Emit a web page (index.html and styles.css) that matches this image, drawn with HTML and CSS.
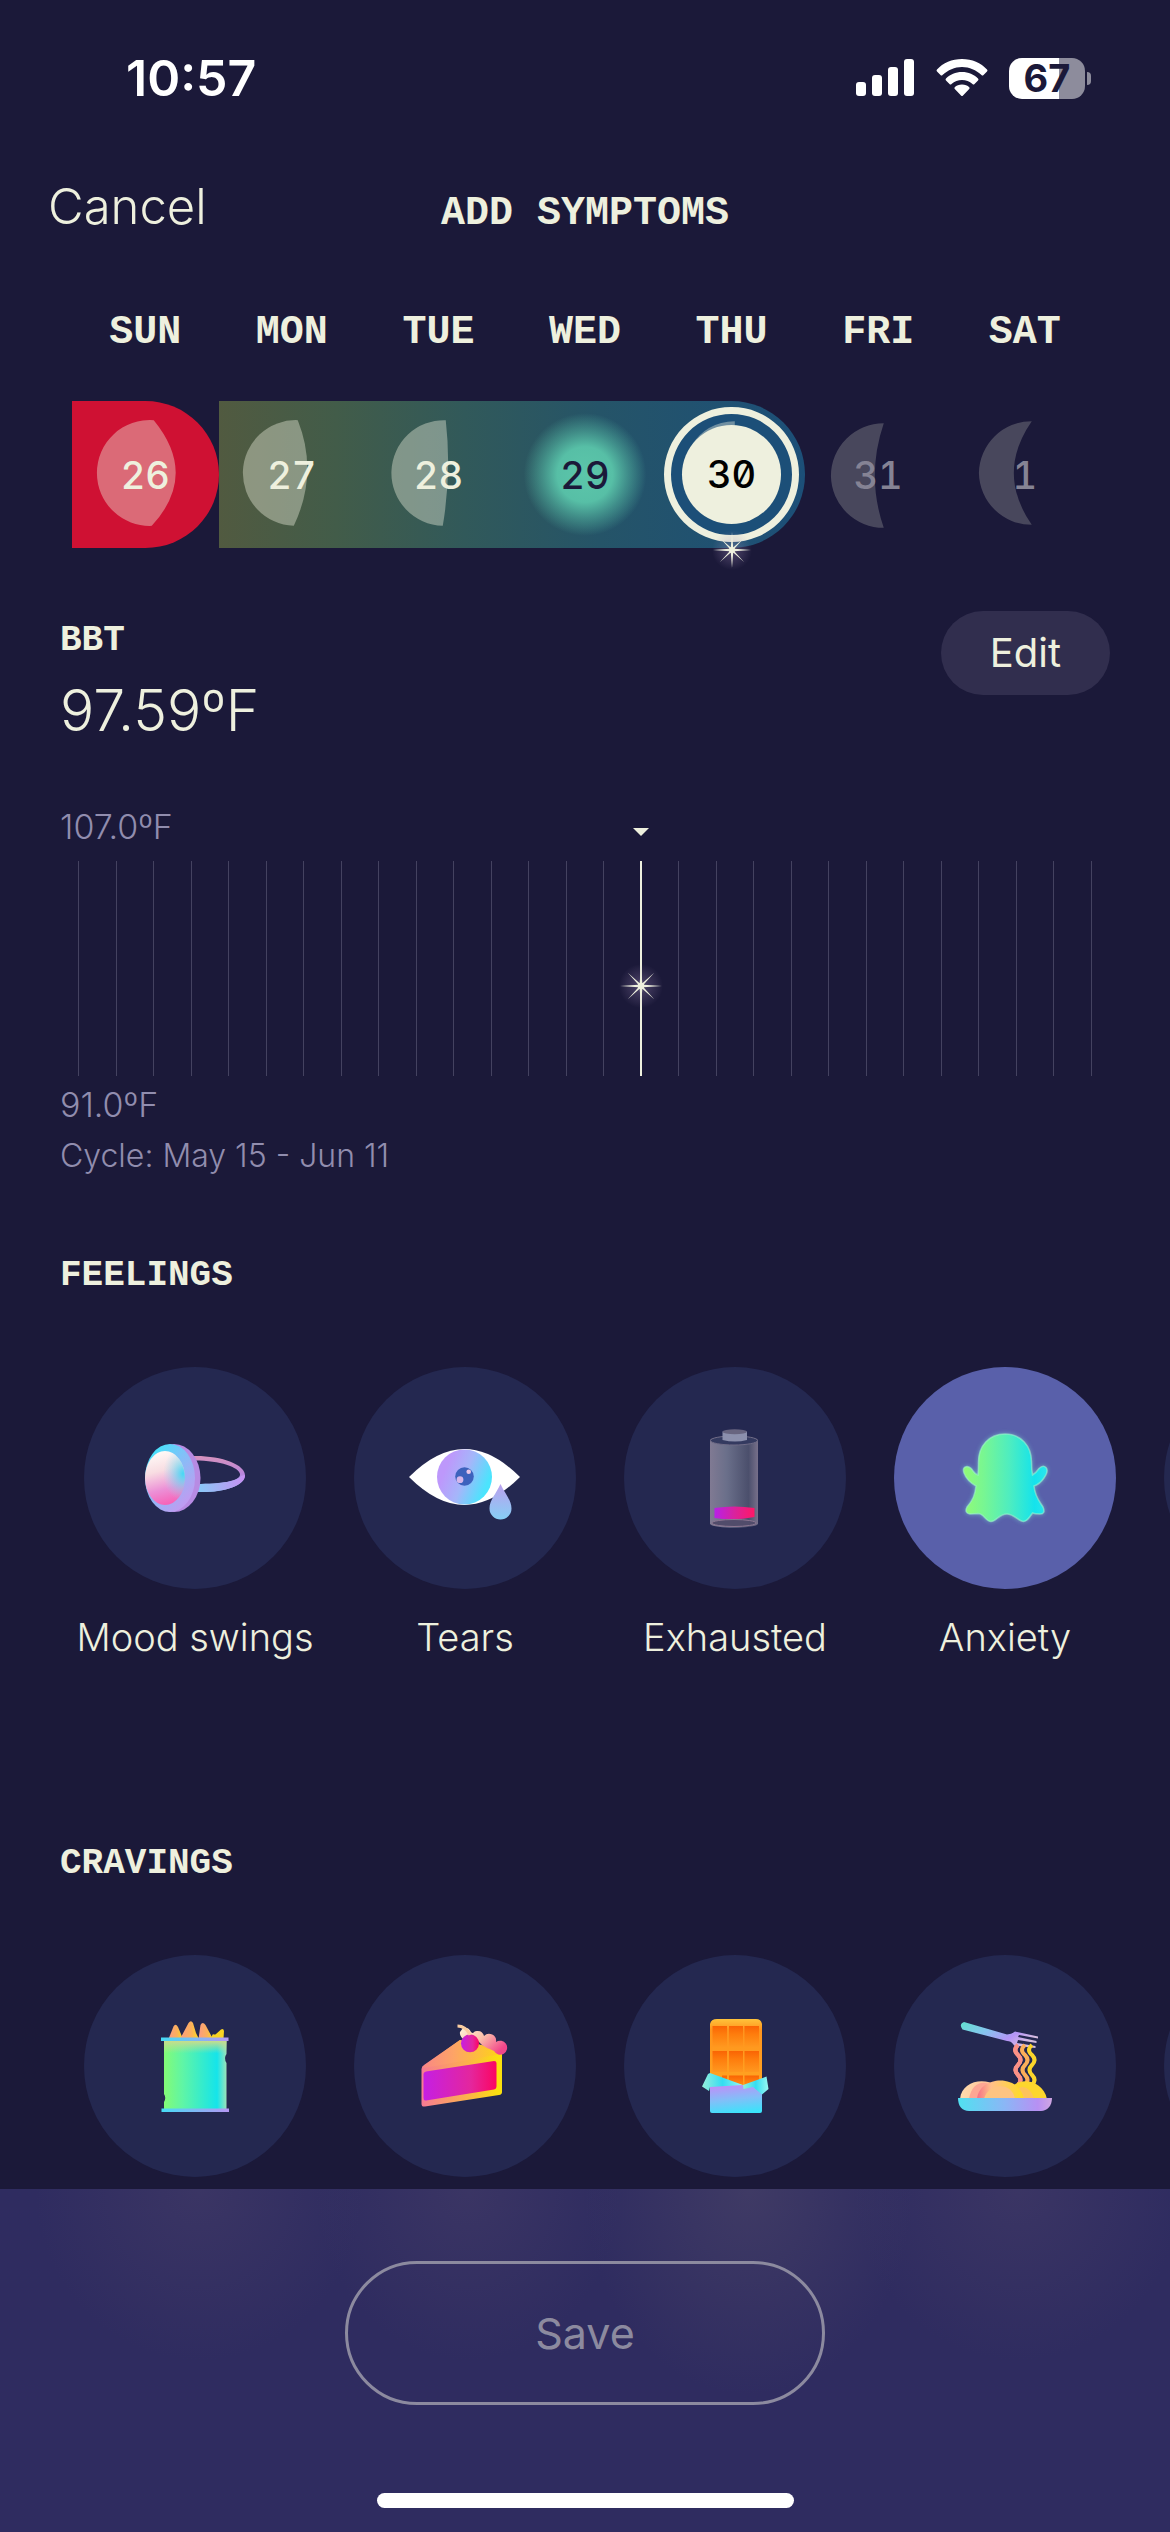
FILE: index.html
```html
<!DOCTYPE html>
<html lang="en">
<head>
<meta charset="utf-8">
<meta name="viewport" content="width=device-width, initial-scale=1">
<title>Add symptoms</title>
<link rel="stylesheet" href="styles.css">
</head>
<body>
<div class="status-bar">
  <time class="clock">10:57</time>
  <div class="status-icons">
    <svg width="59" height="38" viewBox="0 0 59 38" fill="#fff" aria-hidden="true">
      <rect x="0" y="23" width="10" height="14" rx="3"/><rect x="16" y="16" width="10" height="21" rx="3"/><rect x="32" y="8" width="10" height="29" rx="3"/><rect x="48" y="0" width="10" height="37" rx="3"/>
    </svg>
    <svg width="52" height="38" viewBox="0 0 52 38" fill="#fff" aria-hidden="true">
      <path d="M26 0C36 0 45 4 51 10.500Q52 11.500 51 12.500L47.500 16Q46.500 17 45.500 16C40 11 33.500 8 26 8S12 11 6.500 16Q5.500 17 4.500 16L1 12.500Q0 11.500 1 10.500C7 4 16 0 26 0Z"/>
      <path d="M26 13C32.500 13 38 15.500 42 19.500Q43 20.500 42 21.500L38.500 25Q37.500 26 36.500 25C33.500 22.500 30 21 26 21S18.500 22.500 15.500 25Q14.500 26 13.500 25L10 21.500Q9 20.500 10 19.500C14 15.500 19.500 13 26 13Z"/>
      <path d="M26 25.500C29 25.500 31.500 26.500 33.300 28.300Q34 29.200 33.200 30L27 36.500Q26 37.500 25 36.500L18.800 30Q18 29.200 18.700 28.300C20.500 26.500 23 25.500 26 25.500Z"/>
    </svg>
    <div class="battery"><span class="battery-level">67</span></div>
  </div>
</div>

<header class="top-bar">
  <button class="cancel" type="button">Cancel</button>
  <h1 class="mono-title">ADD SYMPTOMS</h1>
</header>

<main>
  <section class="calendar" aria-label="Week">
    <div class="week weekdays">
      <span>SUN</span><span>MON</span><span>TUE</span><span>WED</span><span>THU</span><span>FRI</span><span>SAT</span>
    </div>
    <div class="week days">
      <div class="phase"></div>
      <button type="button" class="day period"><svg class="moon" viewBox="0 0 147 147" aria-hidden="true"><path d="M82 19Q127 74 80 125A53 53 0 0 1 25 72A53 53 0 0 1 82 19Z"/></svg><span>26</span></button>
      <button type="button" class="day"><svg class="moon" viewBox="0 0 147 147" aria-hidden="true"><path d="M79 19Q100 72 75 125A53 53 0 0 1 79 19Z"/></svg><span>27</span></button>
      <button type="button" class="day"><svg class="moon" viewBox="0 0 147 147" aria-hidden="true"><path d="M81 19Q87 72 78 125A53 53 0 0 1 81 19Z"/></svg><span>28</span></button>
      <button type="button" class="day ovulation"><span>29</span></button>
      <button type="button" class="day selected" aria-current="date">
        <svg class="moon" viewBox="0 0 147 147" aria-hidden="true"><path d="M77 20V26Q56 27 34 44Q48 21 77 20Z"/></svg>
        <span class="disc">30</span>
        <svg class="sparkle" width="40" height="40" viewBox="0 0 40 40" aria-hidden="true"><use href="#spark"/></svg>
      </button>
      <button type="button" class="day future"><svg class="moon" viewBox="0 0 147 147" aria-hidden="true"><path d="M79 22Q61 75 79 127A53 53 0 0 1 26 75A53 53 0 0 1 79 22Z"/></svg><span>31</span></button>
      <button type="button" class="day future"><svg class="moon" viewBox="0 0 147 147" aria-hidden="true"><path d="M81 20Q45 72 81 124A53 53 0 0 1 28 72A53 53 0 0 1 81 20Z"/></svg><span>1</span></button>
    </div>
  </section>

  <section class="bbt">
    <div class="bbt-head">
      <div class="bbt-reading">
        <h2 class="section-title">BBT</h2>
        <p class="reading">97.59ºF</p>
      </div>
      <button class="edit" type="button">Edit</button>
    </div>
    <p class="note chart-max">107.0ºF</p>
    <div class="chart">
      <i></i><i></i><i></i><i></i><i></i><i></i><i></i><i></i><i></i><i></i><i></i><i></i><i></i><i></i><i></i>
      <i class="today"><svg class="sparkle" width="44" height="44" viewBox="0 0 40 40" aria-hidden="true">
        <defs>
          <radialGradient id="glow"><stop offset="0" stop-color="#a28bb8" stop-opacity=".4"/><stop offset="1" stop-color="#a28bb8" stop-opacity="0"/></radialGradient>
          <g id="spark"><circle cx="20" cy="20" r="20" fill="url(#glow)"/><path fill="#eef0de" d="M20 2L21.200 17.500L32 8L22.300 18.800L39 20L22.300 21.200L32 32L21.200 22.500L20 38L18.800 22.500L8 32L17.700 21.200L1 20L17.700 18.800L8 8L18.800 17.500Z"/><circle cx="20" cy="20" r="3" fill="#eef0de"/></g>
        </defs>
        <use href="#spark"/>
      </svg></i>
      <i></i><i></i><i></i><i></i><i></i><i></i><i></i><i></i><i></i><i></i><i></i><i></i>
    </div>
    <p class="note chart-min">91.0ºF</p>
    <p class="note cycle">Cycle: May 15 - Jun 11</p>
  </section>

  <section class="symptoms feelings">
    <h2 class="section-title">FEELINGS</h2>
    <div class="options">
      <button type="button" class="option" aria-pressed="false">
        <svg class="bubble" viewBox="0 0 222 222" aria-hidden="true">
          <defs>
            <linearGradient id="band" x1="0" y1="0" x2="0" y2="1"><stop offset="0" stop-color="#d893bd"/><stop offset=".5" stop-color="#b886dc"/><stop offset="1" stop-color="#88cdf8"/></linearGradient>
            <linearGradient id="bandLow"><stop offset="0" stop-color="#86cdf8"/><stop offset="1" stop-color="#c78ff2"/></linearGradient>
            <linearGradient id="rim" x1="0" y1="0" x2=".8" y2="1"><stop offset=".1" stop-color="#3fe6fb"/><stop offset=".45" stop-color="#7fc2f8"/><stop offset="1" stop-color="#c996f0"/></linearGradient>
            <linearGradient id="stone" x1=".4" y1="0" x2=".6" y2="1"><stop offset="0" stop-color="#fffaf7"/><stop offset=".35" stop-color="#f8dde2"/><stop offset=".7" stop-color="#ec8fd6"/><stop offset="1" stop-color="#f85fb5"/></linearGradient>
            <radialGradient id="stoneBlue" cx=".95" cy=".42" r=".5"><stop offset="0" stop-color="#45d8f5"/><stop offset="1" stop-color="#9cdcf5" stop-opacity="0"/></radialGradient>
          </defs>
          <path d="M108 89C135 88 162 97 161 109C160 119 139 126 112 125V117C138 117 157 114 156 107C155 100 135 93 108 93.500Z" fill="url(#band)"/>
          <path d="M112 117C138 117 154 114 157 109L161 108C161 119 139 126 112 125Z" fill="url(#bandLow)"/>
          <ellipse cx="90" cy="111" rx="26.500" ry="34" fill="#b78be3"/>
          <ellipse cx="86" cy="111" rx="25" ry="34" fill="url(#rim)"/>
          <ellipse cx="81" cy="111" rx="20" ry="27" fill="url(#stone)"/>
          <ellipse cx="81" cy="111" rx="20" ry="27" fill="url(#stoneBlue)"/>
        </svg>
        <span>Mood swings</span>
      </button>
      <button type="button" class="option" aria-pressed="false">
        <svg class="bubble" viewBox="0 0 222 222" aria-hidden="true">
          <defs>
            <linearGradient id="iris" x1="0" y1=".3" x2="1" y2=".7"><stop offset=".15" stop-color="#bd98fb"/><stop offset=".5" stop-color="#a5b6fa"/><stop offset=".9" stop-color="#4be4fd"/></linearGradient>
            <linearGradient id="tear" x1="0" y1="0" x2="0" y2="1"><stop offset="0" stop-color="#bba0ee"/><stop offset="1" stop-color="#86cff5"/></linearGradient>
          </defs>
          <path d="M55 110Q83 82 110.500 82T166 110Q138 138 110.500 138T55 110Z" fill="#fff"/>
          <circle cx="110.500" cy="110" r="27.500" fill="url(#iris)"/>
          <circle cx="110.500" cy="109.500" r="9.300" fill="#3d62bd"/>
          <circle cx="114.700" cy="104.700" r="2.300" fill="#e9c6e8"/><circle cx="106" cy="112.700" r="3.400" fill="#d5b6ea"/>
          <path d="M146.500 117C151 127 157.500 133 157.500 141.500A11 11 0 0 1 135.500 141.500C135.500 133 142 127 146.500 117Z" fill="url(#tear)"/>
        </svg>
        <span>Tears</span>
      </button>
      <button type="button" class="option" aria-pressed="false">
        <svg class="bubble" viewBox="0 0 222 222" aria-hidden="true">
          <defs>
            <linearGradient id="cell"><stop offset="0" stop-color="#807a93"/><stop offset=".35" stop-color="#6a6f8a"/><stop offset=".8" stop-color="#4b4f6c"/><stop offset="1" stop-color="#77708a"/></linearGradient>
            <linearGradient id="charge"><stop offset="0" stop-color="#b820e8"/><stop offset=".5" stop-color="#d9229d"/><stop offset="1" stop-color="#ff1766"/></linearGradient>
          </defs>
          <path d="M86 73V157C90 162 130 162 134 157V73C130 68 90 68 86 73Z" fill="url(#cell)"/>
          <ellipse cx="110" cy="73.500" rx="23.500" ry="4.500" fill="#343a60" stroke="#6f6b86"/>
          <path d="M98.500 64.500V73Q111 76 123 73V64.500Z" fill="#8c90ad"/><ellipse cx="110.700" cy="64.700" rx="12.200" ry="2.500" fill="#686580"/>
          <path d="M90.500 141Q110 138 130.500 141V150Q110 154 90.500 151Z" fill="url(#charge)"/>
          <ellipse cx="110" cy="156" rx="22" ry="3.500" fill="#514c6b" stroke="#8d7792"/>
        </svg>
        <span>Exhausted</span>
      </button>
      <button type="button" class="option active" aria-pressed="true">
        <svg class="bubble" viewBox="0 0 222 222" aria-hidden="true">
          <defs>
            <linearGradient id="ghost"><stop offset="0" stop-color="#93fb75"/><stop offset=".25" stop-color="#77f693"/><stop offset=".55" stop-color="#4eedc0"/><stop offset=".85" stop-color="#14e3ec"/><stop offset="1" stop-color="#2be4ee"/></linearGradient>
            <filter id="halo" x="-20%" y="-20%" width="140%" height="140%"><feGaussianBlur stdDeviation="2.500"/></filter>
            <path id="ghostBody" d="M111 67C127 67 137.500 79 137.500 95Q137.500 103 138.500 108Q142 106 145 101.500Q149 97.500 152 100.500Q155 104 150 111Q146 117 140 119C141 130 146 135 149 140Q152 147 146 147Q141 147 138.500 146C135 151 133 154.500 129.500 154.500C125 154.500 120 147 113 147C105 147 102 154.500 97 154.500C92 154.500 90 147 84.500 146.500L76 147Q70 146 73 140C79 133 81 128 82 119Q73 114 70 106Q68 100 73 99.500Q77 100 79 104Q81 107 84 108Q84.500 102 84.500 95C84.500 79 95 67 111 67Z"/>
          </defs>
          <use href="#ghostBody" fill="#86efe0" opacity=".6" filter="url(#halo)"/>
          <use href="#ghostBody" fill="url(#ghost)" stroke="#a1f7ce" stroke-opacity=".55" stroke-width="1.500"/>
        </svg>
        <span>Anxiety</span>
      </button>
      <button type="button" class="option" aria-label="More feelings"><svg class="bubble" viewBox="0 0 222 222" aria-hidden="true"></svg></button>
    </div>
  </section>

  <section class="symptoms cravings">
    <h2 class="section-title">CRAVINGS</h2>
    <div class="options">
      <button type="button" class="option" aria-label="Salty">
        <svg class="bubble" viewBox="0 0 222 222" aria-hidden="true">
          <defs>
            <linearGradient id="can"><stop offset="0" stop-color="#83fb76"/><stop offset=".3" stop-color="#5ff5a6"/><stop offset=".85" stop-color="#15e4ea"/><stop offset="1" stop-color="#9be3ba"/></linearGradient>
            <linearGradient id="canTop" x1="0" y1="0" x2="0" y2="1"><stop offset="0" stop-color="#c8dc8d"/><stop offset=".18" stop-color="#c8dc8d" stop-opacity="0"/></linearGradient>
            <linearGradient id="lip"><stop offset="0" stop-color="#45dcf5"/><stop offset="1" stop-color="#b696f3"/></linearGradient>
            <linearGradient id="chip"><stop offset="0" stop-color="#fb9b83"/><stop offset=".6" stop-color="#fbb15a"/><stop offset="1" stop-color="#fcdc18"/></linearGradient>
          </defs>
          <path d="M84.500 84L89.500 71.500Q91.500 68 94 72L99 84Z" fill="url(#chip)"/>
          <path d="M96 84L104.500 68Q107 64.500 109 68L112 78L115 84Z" fill="url(#chip)"/>
          <path d="M114.500 84L116.500 70Q118.500 66 121.500 70L129 84Z" fill="url(#chip)"/>
          <path d="M126 84L129 79Q130.500 80 132 79L137 74.500Q139.500 73 140 76L139.500 84Z" fill="#f9d323"/>
          <path d="M80 86H142.500V99Q139.500 103 142.500 108V154H80V147Q82.500 143 80 139Z" fill="url(#can)"/>
          <path d="M80 86H142.500V99Q139.500 103 142.500 108V154H80V147Q82.500 143 80 139Z" fill="url(#canTop)"/>
          <path d="M77 82.500H144.500V86H77ZM77.500 153.500H145V157H77.500Z" fill="url(#lip)"/>
        </svg>
      </button>
      <button type="button" class="option" aria-label="Sweet">
        <svg class="bubble" viewBox="0 0 222 222" aria-hidden="true">
          <defs>
            <linearGradient id="crust"><stop offset="0" stop-color="#f77a94"/><stop offset=".5" stop-color="#fbab55"/><stop offset=".95" stop-color="#fae00e"/></linearGradient>
            <linearGradient id="topping"><stop offset="0" stop-color="#f98685"/><stop offset=".4" stop-color="#fda466"/><stop offset="1" stop-color="#fed514"/></linearGradient>
            <linearGradient id="jam"><stop offset="0" stop-color="#c51fe3"/><stop offset=".65" stop-color="#e4269d"/><stop offset="1" stop-color="#fc0561"/></linearGradient>
            <linearGradient id="cream" x1="0" y1="0" x2="1" y2=".6"><stop offset="0" stop-color="#fff5d9"/><stop offset=".5" stop-color="#fac0aa"/><stop offset="1" stop-color="#f2468b"/></linearGradient>
          </defs>
          <path d="M70 110L106 85L148 95V137Q148 139.500 145 140L71 151.500Q67.500 152 67.500 149V114Q67.500 112 70 110Z" fill="url(#crust)"/>
          <path d="M68 112L106 85L147.500 95V99L70 113Z" fill="url(#topping)"/>
          <path d="M72 116.500L140 106Q142.500 106 142.500 108V131Q142.500 134 140 134.500L72 145.500Q69.500 146 69.500 143V119Q69.500 117 72 116.500Z" fill="url(#jam)"/>
          <path d="M109 73A7 7 0 0 1 117 77Q119 79 120 77A6.500 6.500 0 0 1 130 81A7 7 0 0 1 142 87A7 7 0 1 1 140 96Q136 94 133 93Q128 91 124 86L112 86Q105 82 106 77Z" fill="url(#cream)"/>
          <circle cx="116" cy="88.300" r="9" fill="url(#jam)"/>
          <path d="M103.500 71Q112 71 116 80" fill="none" stroke="#facda1" stroke-width="3"/>
        </svg>
      </button>
      <button type="button" class="option" aria-label="Chocolate">
        <svg class="bubble" viewBox="0 0 222 222" aria-hidden="true">
          <defs>
            <linearGradient id="bar" x1="0" y1="0" x2="0" y2="1"><stop offset="0" stop-color="#ffc33b"/><stop offset=".14" stop-color="#ff951e"/><stop offset="1" stop-color="#ffa521"/></linearGradient>
            <linearGradient id="square" x1="0" y1="0" x2="0" y2="1"><stop offset="0" stop-color="#fa6404"/><stop offset=".4" stop-color="#fe7d0d"/><stop offset="1" stop-color="#ff981f"/></linearGradient>
            <linearGradient id="wrap" x1=".4" y1="0" x2=".6" y2="1"><stop offset="0" stop-color="#bd91f8"/><stop offset=".5" stop-color="#82bff8"/><stop offset="1" stop-color="#3ae4fb"/></linearGradient>
            <linearGradient id="flap"><stop offset="0" stop-color="#95efdc"/><stop offset=".5" stop-color="#35ddf2"/><stop offset="1" stop-color="#9af8f2"/></linearGradient>
          </defs>
          <path d="M86 69Q87 64 93 64H132Q137 64 138 69V140H86Z" fill="url(#bar)"/>
          <g fill="url(#square)"><path d="M88.500 71H103V92H88.500Z"/><path d="M105 71H119V92H105Z"/><path d="M120.500 71H135V92H120.500Z"/><path d="M88.500 96H103V117H88.500Z"/><path d="M105 96H119V117H105Z"/><path d="M120.500 96H135V117H120.500Z"/><path d="M98 120.500H103V135H98ZM105 120.500H119V135H105ZM120.500 120.500H135V135H120.500Z"/></g>
          <path d="M86 130L119 130L138 130V156Q138 158 136 158H88Q86 158 86 156Z" fill="url(#wrap)"/>
          <path d="M86 118L119 130L86 132L85 136L78 131.500L84 119Z" fill="url(#flap)"/>
          <path d="M119 130L142.500 121.500L144.500 134L138 139.500L129 132L119.500 134Z" fill="url(#flap)"/>
        </svg>
      </button>
      <button type="button" class="option" aria-label="Carbs">
        <svg class="bubble" viewBox="0 0 222 222" aria-hidden="true">
          <defs>
            <linearGradient id="fork" x1="0" y1="0" x2="1" y2=".5"><stop offset="0" stop-color="#62e1cf"/><stop offset=".4" stop-color="#86c5ef"/><stop offset=".75" stop-color="#b595f7"/><stop offset="1" stop-color="#d6bde0"/></linearGradient>
            <linearGradient id="dish"><stop offset="0" stop-color="#50e1f1"/><stop offset=".5" stop-color="#8bb6f6"/><stop offset=".85" stop-color="#b790f3"/><stop offset="1" stop-color="#d0a6e2"/></linearGradient>
            <linearGradient id="pastaA"><stop offset="0" stop-color="#ffdcae"/><stop offset="1" stop-color="#ffb38b"/></linearGradient>
            <linearGradient id="pastaB"><stop offset="0" stop-color="#f66f85"/><stop offset=".3" stop-color="#ffc08a"/><stop offset="1" stop-color="#ffdc1f"/></linearGradient>
          </defs>
          <path d="M70 67L113 79.500Q118 79 121 76.500L144 81.500V83.500L125 80L124 82L142.500 86V88L124 85L123 88L141.500 91V93L125 91Q120 92 119 89Q117 86 113 86L68.500 74.500Q64.500 69 70 67Z" fill="url(#fork)"/>
          <g fill="none" stroke-width="4"><path d="M124 90q-5 5 0 10t0 10t0 10t0 10" stroke="#fb9186"/><path d="M124 90q-6 5 0 10q5 5 0 10q-5 5 0 10q5 5 0 10" stroke="#fb9186"/><path d="M131 90q-6 5 0 10q5 5 0 10q-5 5 0 10q5 5 0 10" stroke="#fcae59"/><path d="M138 90q-6 5 0 10q5 5 0 10q-5 5 0 10q5 5 0 10" stroke="#fbd52b"/></g>
          <path d="M66 144C68 121 106 120 111 144Z" fill="url(#pastaA)"/>
          <path d="M75 144C78 123 100 122 105 144Z" fill="#fda693"/>
          <path d="M113 144C114 120 148 121 153 144Z" fill="#fdd62d"/>
          <path d="M120 144C120 128 136 128 140 144Z" fill="#fec35a"/>
          <path d="M83 144C85 121 125 118 130 144Z" fill="url(#pastaB)"/>
          <path d="M90 144C94 128 118 126 121 144Z" fill="#fec481"/>
          <path d="M64 143H158C158 151 153 156 147 156H75C68 156 64 151 64 143Z" fill="url(#dish)"/>
        </svg>
      </button>
      <button type="button" class="option" aria-label="More cravings"><svg class="bubble" viewBox="0 0 222 222" aria-hidden="true"></svg></button>
    </div>
  </section>
</main>

<footer class="save-bar">
  <button class="save" type="button" disabled>Save</button>
  <div class="home-indicator"></div>
</footer>
</body>
</html>
```
FILE: styles.css
```css
:root {
  --bg: #1b1939;
  --cream: #eef0de;
  --muted: #918dae;
  --bubble: #242850;
}

* { box-sizing: border-box; }

body {
  margin: 0;
  min-height: 100vh;
  display: flex;
  flex-direction: column;
  overflow-x: hidden;
  background: var(--bg);
  color: var(--cream);
  font-family: Inter, "Liberation Sans", sans-serif;
  font-weight: 300;
}

h1, h2, p { margin: 0; }

button {
  padding: 0;
  border: 0;
  background: none;
  color: inherit;
  font: inherit;
}

/* Status bar */
.status-bar {
  display: flex;
  justify-content: space-between;
  align-items: center;
  padding: 48px 85px 0 126px;
}
.clock {
  color: #fff;
  font-size: 50px;
  font-weight: 600;
  line-height: 60px;
}
.status-icons {
  display: flex;
  align-items: center;
  gap: 21px;
}
.battery {
  position: relative;
  width: 76px;
  height: 41px;
  border-radius: 13px;
  background: linear-gradient(90deg, #fff 66%, #8d8c9c 66%);
  color: var(--bg);
  font-size: 38px;
  font-weight: 700;
  line-height: 41px;
  text-align: center;
}
.battery::after {
  content: "";
  position: absolute;
  left: 78px;
  top: 14px;
  width: 4px;
  height: 13px;
  border-radius: 0 4px 4px 0;
  background: #8d8c9c;
}

/* Title bar */
.top-bar {
  display: grid;
  grid-template-columns: 1fr auto 1fr;
  align-items: baseline;
  margin-top: 69px;
  padding: 0 48px;
}
.cancel {
  justify-self: start;
  font-size: 49px;
  line-height: 60px;
}
.mono-title,
.weekdays {
  font-family: "Liberation Mono", monospace;
  font-size: 40px;
  font-weight: 700;
  line-height: 48px;
}

/* Week strip */
.calendar {
  padding: 71px 72px 0;
}
.week {
  display: grid;
  grid-template-columns: repeat(7, 1fr);
  text-align: center;
}
.days {
  margin-top: 44px;
}
.phase {
  grid-area: 1 / 2 / 2 / 6;
  border-radius: 0 74px 74px 0;
  background: linear-gradient(90deg, #515a40 0%, #425c49 20%, #31595a 42%, #255468 65%, #1c4f78 100%);
}
.day {
  grid-row: 1;
  position: relative;
  display: flex;
  align-items: center;
  justify-content: center;
  height: 147px;
  font-size: 38px;
  font-weight: 500;
  line-height: 48px;
  font-feature-settings: "tnum", "zero";
}
.day:nth-of-type(1) { grid-column: 1; }
.day:nth-of-type(2) { grid-column: 2; }
.day:nth-of-type(3) { grid-column: 3; }
.day:nth-of-type(4) { grid-column: 4; }
.day:nth-of-type(5) { grid-column: 5; }
.day:nth-of-type(6) { grid-column: 6; }
.day:nth-of-type(7) { grid-column: 7; }
.day span { position: relative; }
.moon {
  position: absolute;
  inset: 0;
  width: 100%;
  height: 100%;
  fill: var(--cream);
  opacity: .4;
}
.period {
  border-radius: 0 74px 74px 0;
  background: #cf1133;
}
.ovulation {
  background: radial-gradient(circle closest-side, #5cc6aa 0, #57bfa6 38%, rgba(87, 191, 166, .55) 58%, rgba(87, 191, 166, 0) 84%);
  color: var(--bg);
}
.future { color: #858394; }
.future .moon { opacity: .21; }
.selected::before {
  content: "";
  position: absolute;
  inset: 6px;
  border: 7px solid var(--cream);
  border-radius: 50%;
  background: #1c4f78;
}
.disc {
  width: 99px;
  height: 99px;
  border-radius: 50%;
  background: var(--cream);
  color: #000;
  line-height: 99px;
}
.sparkle {
  position: absolute;
}
.selected .sparkle {
  left: 50%;
  bottom: -22px;
  margin-left: -20px;
}

/* Basal body temperature */
.bbt {
  padding: 63px 60px 0;
}
.bbt-head {
  display: flex;
  justify-content: space-between;
  align-items: flex-start;
}
.bbt-reading { padding-top: 8px; }
.section-title {
  font-family: "Liberation Mono", monospace;
  font-size: 36px;
  font-weight: 700;
  line-height: 44px;
}
.reading {
  margin-top: 16px;
  font-size: 57px;
  line-height: 64px;
}
.edit {
  padding: 18px 49px;
  border-radius: 42px;
  background: #312e4e;
  font-size: 40px;
  font-weight: 400;
  line-height: 48px;
}
.note {
  color: var(--muted);
  font-size: 34px;
  line-height: 40px;
}
.note.cycle { font-size: 32px; }
.chart-max { margin-top: 64px; }
.chart-min { margin: 9px 0 11px; }
.chart {
  display: grid;
  grid-template-columns: repeat(28, 1fr);
  justify-items: center;
  height: 215px;
  margin-top: 14px;
}
.chart i {
  width: 1px;
  background: #444260;
}
.chart .today {
  position: relative;
  width: 2px;
  background: var(--cream);
}
.chart .today::before {
  content: "";
  position: absolute;
  top: -33px;
  left: -7px;
  border: 8px solid transparent;
  border-top-color: var(--cream);
  border-bottom-width: 0;
}
.today .sparkle {
  left: -21px;
  top: 103px;
}

/* Symptom pickers */
.symptoms .section-title { padding-left: 60px; }
.feelings { margin-top: 78px; }
.cravings { margin: 181px 0 12px; }
.options {
  display: flex;
  gap: 48px;
  margin-top: 69px;
  padding-left: 84px;
  overflow: hidden;
}
.option {
  flex: none;
  width: 222px;
  display: flex;
  flex-direction: column;
  align-items: center;
  gap: 24px;
  font-size: 38px;
  line-height: 48px;
  white-space: nowrap;
}
.bubble {
  width: 222px;
  height: 222px;
  border-radius: 50%;
  background: var(--bubble);
}
.active .bubble { background: #5960aa; }

/* Save bar */
.save-bar {
  flex: 1;
  display: flex;
  flex-direction: column;
  align-items: center;
  justify-content: space-between;
  padding: 72px 0 24px;
  background:
    radial-gradient(ellipse 14% 50% at 17% 0, rgba(70, 62, 104, .5), transparent),
    radial-gradient(ellipse 13% 50% at 40% 0, rgba(70, 62, 104, .5), transparent),
    radial-gradient(ellipse 14% 60% at 64% 0, rgba(74, 68, 104, .6), transparent),
    radial-gradient(ellipse 14% 50% at 87% 0, rgba(70, 62, 104, .5), transparent),
    #2f2c60;
}
.save {
  width: 480px;
  height: 144px;
  border: 3px solid #8c8a9f;
  border-radius: 72px;
  color: #8c8a9f;
  font-size: 43px;
  font-weight: 400;
}
.home-indicator {
  width: 417px;
  height: 15px;
  margin-top: 48px;
  border-radius: 8px;
  background: #fff;
}
```
